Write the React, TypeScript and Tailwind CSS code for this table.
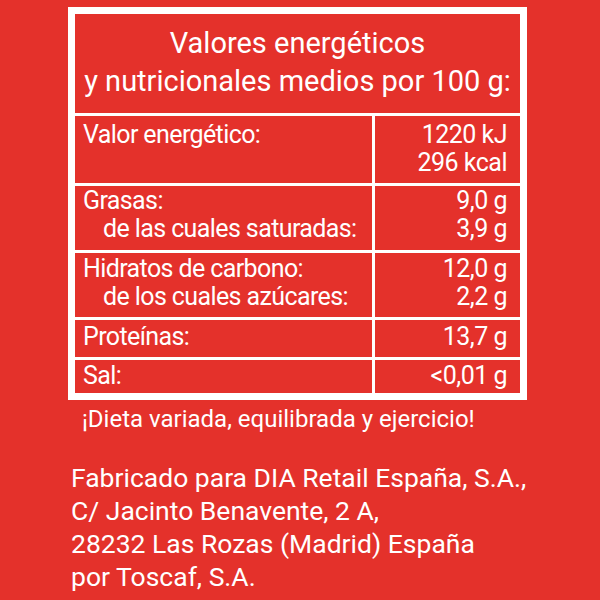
import React from "react";

const rows = [
  { h: "h-[70px]", pt: "pt-[5px]", left: [["Valor energético:", false]], right: ["1220 kJ", "296 kcal"] },
  { h: "h-[67px]", pt: "pt-[1px]", left: [["Grasas:", false], ["de las cuales saturadas:", true]], right: ["9,0 g", "3,9 g"] },
  { h: "h-[67px]", pt: "pt-[2px]", left: [["Hidratos de carbono:", false], ["de los cuales azúcares:", true]], right: ["12,0 g", "2,2 g"] },
  { h: "h-[40px]", pt: "pt-[3px]", left: [["Proteínas:", false]], right: ["13,7 g"] },
  { h: "h-[36px]", pt: "pt-[2px]", left: [["Sal:", false]], right: ["<0,01 g"] },
] as const;

export default function App() {
  return (
    <div
      className="w-[600px] h-[600px] bg-[#e4312b] text-white overflow-hidden"
      style={{ fontFamily: "Roboto, 'Noto Sans', sans-serif" }}
    >
      <div className="pt-[7px] pl-[68px]">
        <div className="w-[459px] border-[7px] border-white">
          <div className="h-[99px] pt-[10px] text-center text-[29px] leading-[38px]">
            <div>Valores energéticos</div>
            <div>y nutricionales medios por 100 g:</div>
          </div>
          {rows.map((r, i) => (
            <div key={i} className={`flex border-t-[3px] border-white ${r.h}`}>
              <div className={`w-[297px] pl-[8px] ${r.pt} text-[25px] leading-[28px] tracking-[-0.6px]`}>
                {r.left.map(([t, ind], j) => (
                  <div key={j} className={ind ? "pl-[20px]" : ""}>
                    {t}
                  </div>
                ))}
              </div>
              <div className={`flex-1 border-l-[3px] border-white pr-[13px] ${r.pt} text-right text-[25px] leading-[28px] tracking-[-0.5px]`}>
                {r.right.map((t, j) => (
                  <div key={j}>{t}</div>
                ))}
              </div>
            </div>
          ))}
        </div>
      </div>
      <div className="pl-[82px] pt-[5px] text-[24px] leading-[28px]">¡Dieta variada, equilibrada y ejercicio!</div>
      <div className="pl-[71px] pt-[28px] text-[26.5px] leading-[33px]">
        <div>Fabricado para DIA Retail España, S.A.,</div>
        <div>C/ Jacinto Benavente, 2 A,</div>
        <div>28232 Las Rozas (Madrid) España</div>
        <div>por Toscaf, S.A.</div>
      </div>
    </div>
  );
}
